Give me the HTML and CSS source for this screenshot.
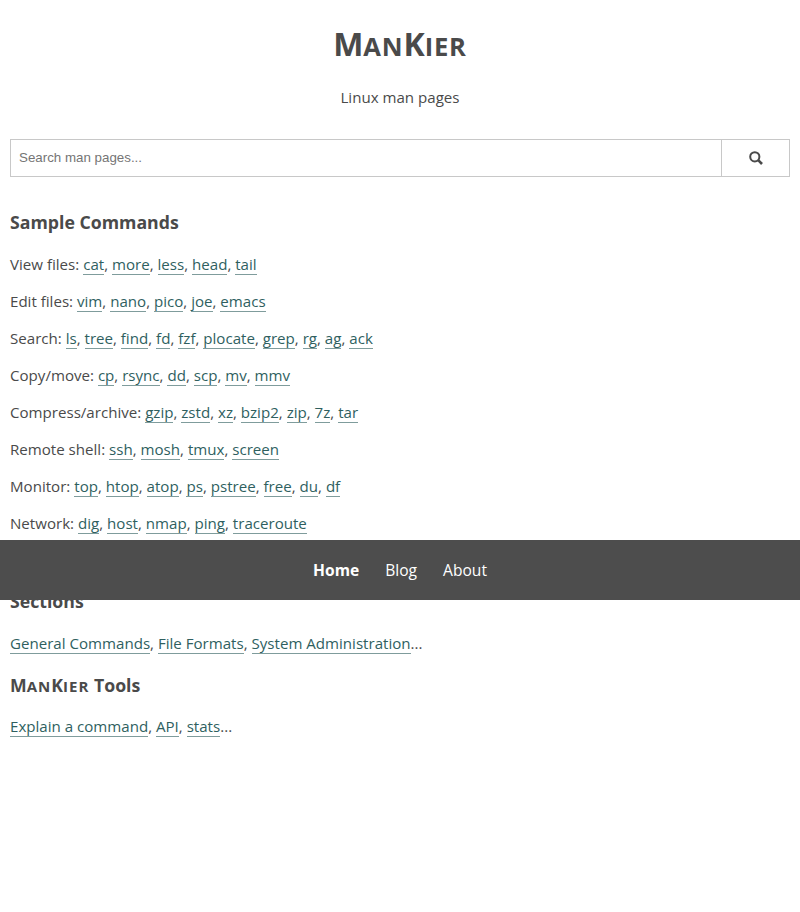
FILE: index.html
```html
<!DOCTYPE html>
<html lang="en">
<head>
  <meta charset="UTF-8">
  <meta name="viewport" content="width=device-width, initial-scale=1.0">
  <title>ManKier</title>
  <link rel="stylesheet" href="styles.css">
</head>
<body>

<header class="site-header">
  <h1 class="logo">M<span class="sc">an</span>K<span class="sc">ier</span></h1>
  <p class="tagline">Linux man pages</p>
</header>

<form class="search">
  <input class="search-input" type="text" placeholder="Search man pages...">
  <button class="search-button" type="button" aria-label="Search">
    <svg width="14" height="14" viewBox="0 0 14 14" fill="none" stroke="#4a4a4a" stroke-width="2">
      <circle cx="5.8" cy="5.8" r="4.6"/>
      <path d="M9.2 9.2L13 13" stroke-width="2.6"/>
    </svg>
  </button>
</form>

<main>
  <h2>Sample Commands</h2>
  <p>View files: <a href="#">cat</a>, <a href="#">more</a>, <a href="#">less</a>, <a href="#">head</a>, <a href="#">tail</a></p>
  <p>Edit files: <a href="#">vim</a>, <a href="#">nano</a>, <a href="#">pico</a>, <a href="#">joe</a>, <a href="#">emacs</a></p>
  <p>Search: <a href="#">ls</a>, <a href="#">tree</a>, <a href="#">find</a>, <a href="#">fd</a>, <a href="#">fzf</a>, <a href="#">plocate</a>, <a href="#">grep</a>, <a href="#">rg</a>, <a href="#">ag</a>, <a href="#">ack</a></p>
  <p>Copy/move: <a href="#">cp</a>, <a href="#">rsync</a>, <a href="#">dd</a>, <a href="#">scp</a>, <a href="#">mv</a>, <a href="#">mmv</a></p>
  <p>Compress/archive: <a href="#">gzip</a>, <a href="#">zstd</a>, <a href="#">xz</a>, <a href="#">bzip2</a>, <a href="#">zip</a>, <a href="#">7z</a>, <a href="#">tar</a></p>
  <p>Remote shell: <a href="#">ssh</a>, <a href="#">mosh</a>, <a href="#">tmux</a>, <a href="#">screen</a></p>
  <p>Monitor: <a href="#">top</a>, <a href="#">htop</a>, <a href="#">atop</a>, <a href="#">ps</a>, <a href="#">pstree</a>, <a href="#">free</a>, <a href="#">du</a>, <a href="#">df</a></p>
  <p>Network: <a href="#">dig</a>, <a href="#">host</a>, <a href="#">nmap</a>, <a href="#">ping</a>, <a href="#">traceroute</a></p>

  <h2 class="sections-title">Sections</h2>
  <p><a href="#">General Commands</a>, <a href="#">File Formats</a>, <a href="#">System Administration</a>...</p>

  <h2 class="tools-title">M<span class="sc">an</span>K<span class="sc">ier</span> Tools</h2>
  <p><a href="#">Explain a command</a>, <a href="#">API</a>, <a href="#">stats</a>...</p>
</main>

<nav class="bottom-nav">
  <a class="nav-link active" href="#">Home</a>
  <a class="nav-link" href="#">Blog</a>
  <a class="nav-link" href="#">About</a>
</nav>

</body>
</html>
```

FILE: styles.css
```css
body {
  font-family: "Open Sans", "Noto Sans", sans-serif;
  font-size: 15.1px;
  line-height: 21px;
  color: #4a4a4a;
  background-color: #fff;
  margin: 0;
  padding: 0 10px;
}
.site-header {
  text-align: center;
  padding-top: 23px;
}
.logo {
  font-size: 32px;
  line-height: 42px;
  font-weight: 700;
  margin: 0;
}
.sc {
  font-size: 0.8em;
  line-height: 1;
  letter-spacing: 0.8px;
  text-transform: uppercase;
}
h2 .sc {
  font-size: 0.85em;
  letter-spacing: 1px;
}
.tagline {
  margin: 22px 0 0;
}
.search {
  display: flex;
  height: 38px;
  margin-top: 31px;
}
.search-input {
  flex: 1;
  min-width: 0;
  box-sizing: border-box;
  height: 38px;
  padding: 0 8px 2px;
  border: 1px solid #c8c8c8;
  border-radius: 0;
  outline: none;
  font-family: "Liberation Sans", Arial, sans-serif;
  font-size: 13.33px;
}
.search-input::placeholder {
  color: #757575;
}
.search-button {
  display: flex;
  align-items: center;
  justify-content: center;
  box-sizing: border-box;
  width: 68px;
  height: 38px;
  padding: 0;
  background-color: #fff;
  border: 1px solid #c8c8c8;
  border-left: 0;
}
h2 {
  font-size: 17.7px;
  line-height: 24px;
  font-weight: 700;
  margin: 20px 0;
}
main {
  padding-top: 33px;
}
main h2:first-child {
  margin-top: 0;
}
main p {
  margin: 16px 0;
}
main .sections-title {
  margin-top: 55px;
}
main .tools-title {
  margin: 19px 0;
}
a {
  color: #2f5f5f;
  text-decoration: none;
  border-bottom: 1px solid #7f9c9c;
}
.bottom-nav {
  position: fixed;
  left: 0;
  right: 0;
  top: 540px;
  height: 60px;
  display: flex;
  align-items: center;
  justify-content: center;
  gap: 26px;
  background-color: #4d4d4d;
  font-size: 15.6px;
}
.nav-link {
  color: #fff;
  border-bottom: 0;
}
.nav-link.active {
  font-weight: 700;
}
```
